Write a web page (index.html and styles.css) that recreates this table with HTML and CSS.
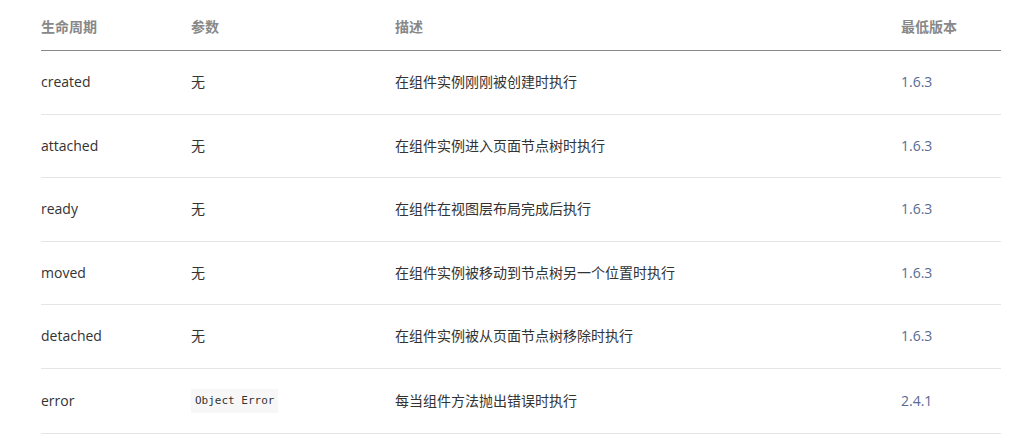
FILE: index.html
```html
<!DOCTYPE html>
<html lang="zh-CN">
<head>
<meta charset="utf-8">
<title>组件生命周期</title>
<link rel="stylesheet" href="styles.css">
</head>
<body>
<table class="lifecycle">
  <colgroup>
    <col class="c1"><col class="c2"><col class="c3"><col class="c4">
  </colgroup>
  <thead>
    <tr><th>生命周期</th><th>参数</th><th>描述</th><th>最低版本</th></tr>
  </thead>
  <tbody>
    <tr><td>created</td><td>无</td><td>在组件实例刚刚被创建时执行</td><td class="ver">1.6.3</td></tr>
    <tr><td>attached</td><td>无</td><td>在组件实例进入页面节点树时执行</td><td class="ver">1.6.3</td></tr>
    <tr><td>ready</td><td>无</td><td>在组件在视图层布局完成后执行</td><td class="ver">1.6.3</td></tr>
    <tr><td>moved</td><td>无</td><td>在组件实例被移动到节点树另一个位置时执行</td><td class="ver">1.6.3</td></tr>
    <tr><td>detached</td><td>无</td><td>在组件实例被从页面节点树移除时执行</td><td class="ver">1.6.3</td></tr>
    <tr class="tall"><td>error</td><td><code class="code">Object Error</code></td><td>每当组件方法抛出错误时执行</td><td class="ver">2.4.1</td></tr>
  </tbody>
</table>
</body>
</html>
```
FILE: styles.css
```css
html, body {
  margin: 0;
  padding: 0;
  background: #fff;
}
body {
  font-family: "Open Sans", "Noto Sans CJK SC", sans-serif;
  font-size: 14px;
  color: #333;
}
.lifecycle {
  margin-left: 41px;
  width: 960px;
  border-collapse: collapse;
  table-layout: fixed;
}
.c1 { width: 150px; }
.c2 { width: 204px; }
.c3 { width: 506px; }
.c4 { width: 100px; }
.lifecycle th {
  text-align: left;
  font-weight: bold;
  color: #888;
  font-size: 14px;
  line-height: 20px;
  padding: 17px 0 13px 0;
  border-bottom: 1px solid #888;
}
.lifecycle td {
  text-align: left;
  line-height: 20px;
  height: 62.5px;
  padding: 0;
  border-bottom: 1px solid #e5e5e5;
  vertical-align: middle;
}
.lifecycle .tall td {
  height: 64px;
}
.lifecycle td.ver {
  color: #576b95;
}
.code {
  display: inline-block;
  font-family: "DejaVu Sans Mono", "Liberation Mono", monospace;
  font-size: 11px;
  line-height: 16px;
  padding: 4px 4px;
  background: #f7f7f7;
  color: #333;
  vertical-align: middle;
}
```
